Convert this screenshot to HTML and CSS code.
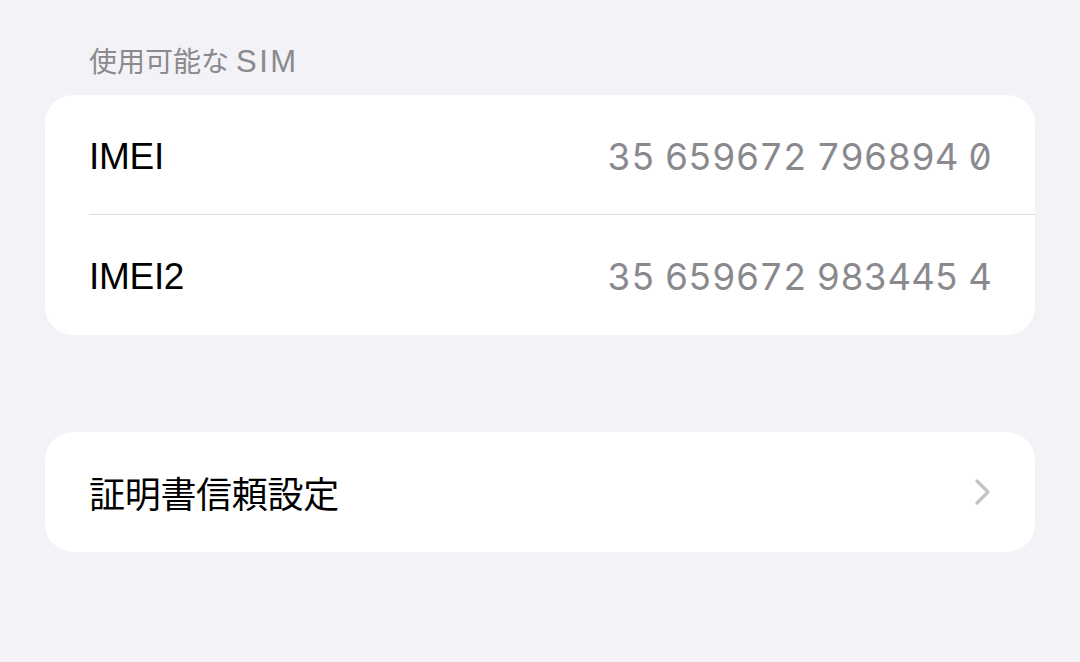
FILE: index.html
```html
<!DOCTYPE html>
<html lang="ja">
<head>
<meta charset="utf-8">
<link rel="stylesheet" href="styles.css">
</head>
<body>
<main class="page">
  <div class="group-header">使用可能な<span class="latin">SIM</span></div>
  <section class="card">
    <div class="row">
      <span class="label">IMEI</span>
      <span class="value">35 659672 796894 0</span>
    </div>
    <div class="row">
      <span class="label">IMEI2</span>
      <span class="value">35 659672 983445 4</span>
    </div>
  </section>
  <section class="card card-gap">
    <div class="row">
      <span class="label jp">証明書信頼設定</span>
      <svg class="chevron" width="18" height="28" viewBox="0 0 18 28" aria-hidden="true">
        <path d="M3 3 L14 14 L3 25" fill="none" stroke="#c4c4c7" stroke-width="3.2" stroke-linecap="round" stroke-linejoin="round"/>
      </svg>
    </div>
  </section>
</main>
</body>
</html>
```

FILE: styles.css
```css
html, body {
  margin: 0;
  padding: 0;
  background: #f2f2f7;
}
body {
  font-family: "Inter", "Liberation Sans", "Noto Sans CJK JP", sans-serif;
  color: #000;
  width: 1080px;
  height: 662px;
  overflow: hidden;
}
.page {
  padding: 38px 45px 0 45px;
}
.group-header {
  font-family: "Noto Sans CJK JP", sans-serif;
  font-size: 28px;
  line-height: 44px;
  height: 44px;
  color: #8a8a8e;
  padding-left: 44px;
  margin-bottom: 13px;
}
.group-header .latin {
  font-family: "Liberation Sans", sans-serif;
  font-size: 31px;
  line-height: 1;
  letter-spacing: 2.5px;
  margin-left: 7px;
}
.card {
  background: #fff;
  border-radius: 28px;
  overflow: hidden;
}
.card-gap {
  margin-top: 97px;
}
.row {
  height: 120px;
  display: flex;
  align-items: center;
  justify-content: space-between;
  padding: 0 45px 0 44px;
  position: relative;
}
.row + .row::before {
  content: "";
  position: absolute;
  left: 44px;
  right: 0;
  top: -1px;
  height: 1px;
  background: #dcdce0;
}
.label {
  font-family: "Liberation Sans", "Noto Sans CJK JP", sans-serif;
  font-size: 37px;
  letter-spacing: -0.3px;
  padding-top: 4px;
}
.label.jp {
  font-family: "Noto Sans CJK JP", sans-serif;
  font-size: 36px;
  padding-top: 0;
}
.value {
  font-family: "Inter", sans-serif;
  font-feature-settings: "tnum" 1, "zero" 1;
  font-size: 36.5px;
  color: #8a8a8e;
  padding-top: 4px;
  margin-right: -2px;
}
.chevron {
  margin-right: -2px;
}
```
